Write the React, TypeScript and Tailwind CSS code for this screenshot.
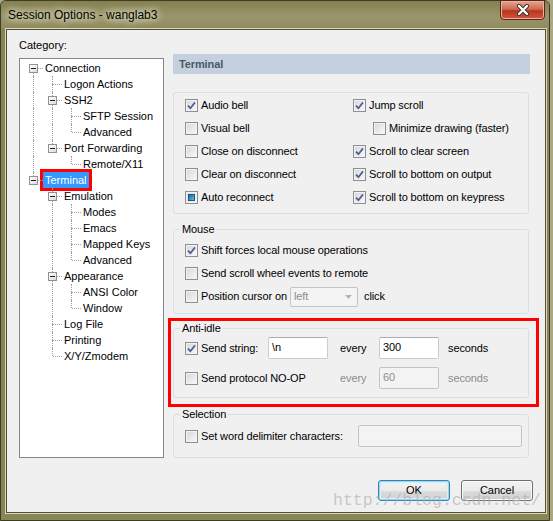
import type { ReactNode } from "react";

type TreeNode = { label: string; children?: TreeNode[]; selected?: boolean };

type Row = {
  label: string;
  depth: number;
  hasKids: boolean;
  first: boolean;
  last: boolean;
  guides: boolean[];
  selected?: boolean;
};

const categories: TreeNode[] = [
  {
    label: "Connection",
    children: [
      { label: "Logon Actions" },
      { label: "SSH2", children: [{ label: "SFTP Session" }, { label: "Advanced" }] },
      { label: "Port Forwarding", children: [{ label: "Remote/X11" }] },
    ],
  },
  {
    label: "Terminal",
    selected: true,
    children: [
      {
        label: "Emulation",
        children: [
          { label: "Modes" },
          { label: "Emacs" },
          { label: "Mapped Keys" },
          { label: "Advanced" },
        ],
      },
      { label: "Appearance", children: [{ label: "ANSI Color" }, { label: "Window" }] },
      { label: "Log File" },
      { label: "Printing" },
      { label: "X/Y/Zmodem" },
    ],
  },
];

function flatten(nodes: TreeNode[], depth: number, guides: boolean[], out: Row[]): Row[] {
  nodes.forEach((n, i) => {
    const last = i === nodes.length - 1;
    out.push({
      label: n.label,
      depth,
      hasKids: !!n.children,
      first: depth === 0 && i === 0,
      last,
      guides,
      selected: n.selected,
    });
    if (n.children) flatten(n.children, depth + 1, [...guides, !last], out);
  });
  return out;
}

const dots = "border-dotted border-[#a0a0a0]";

function TreeRow({ row }: { row: Row }) {
  return (
    <div className="flex h-4 items-center pl-[4px]">
      {row.guides.map((g, i) => (
        <span key={i} className="relative h-4 w-[19px] shrink-0">
          {g && <span className={`absolute left-[9px] top-0 h-4 border-l ${dots}`} />}
        </span>
      ))}
      <span className="relative h-4 w-[19px] shrink-0">
        {!row.first && <span className={`absolute left-[9px] top-0 h-2 border-l ${dots}`} />}
        {!row.last && <span className={`absolute left-[9px] top-2 h-2 border-l ${dots}`} />}
        <span className={`absolute left-[10px] top-2 w-[9px] border-t ${dots}`} />
        {row.hasKids && (
          <span className="absolute left-[5px] top-[4px] flex h-[9px] w-[9px] items-center justify-center border border-[#919191] bg-[linear-gradient(135deg,#ffffff,#dcdcdc)]">
            <span className="h-px w-[5px] bg-[#1e1e1e]" />
          </span>
        )}
      </span>
      <span
        className={
          row.selected
            ? "bg-[#3399ff] px-[2px] leading-4 text-white outline-[3px] outline-[#ff0000]"
            : "px-[2px] leading-4 text-black"
        }
      >
        {row.label}
      </span>
    </div>
  );
}

function Check({ state }: { state?: "on" | "mixed" }) {
  return (
    <span className="flex h-[13px] w-[13px] shrink-0 items-center justify-center border border-[#8e8f8f] bg-[linear-gradient(135deg,#d6d6d6,#fafafa)] shadow-[inset_0_0_0_1px_#f2f2f2]">
      {state === "on" && (
        <svg width="11" height="11" viewBox="0 0 11 11">
          <path d="M2 5.6 L4.4 8.2 L9 2.4" fill="none" stroke="#4a5f93" strokeWidth="1.7" />
        </svg>
      )}
      {state === "mixed" && (
        <span className="h-[7px] w-[7px] border border-[#1d5786] bg-[linear-gradient(135deg,#1b6aa5,#5cbbe6)]" />
      )}
    </span>
  );
}

function Option({ label, state, className = "" }: { label: string; state?: "on" | "mixed"; className?: string }) {
  return (
    <div className={`flex items-center gap-[3px] ${className}`}>
      <Check state={state} />
      <span className="whitespace-nowrap">{label}</span>
    </div>
  );
}

function Group({ title, children }: { title: string; children: ReactNode }) {
  return (
    <fieldset className="mr-[1px] rounded-[3px] border border-[#d5dfe5]">
      <legend className="ml-[6px] px-[2px] leading-[14px]">{title}</legend>
      {children}
    </fieldset>
  );
}

function Field({ value, disabled, className = "" }: { value?: string; disabled?: boolean; className?: string }) {
  return (
    <div
      className={`h-[22px] rounded-[2px] border pl-[3px] leading-[18px] ${
        disabled
          ? "border-[#c2c4c8] bg-[#f3f3f3] text-[#8d8d8d]"
          : "border-[#c9ccd2] border-t-[#abadb3] bg-white text-black"
      } ${className}`}
    >
      {value}
    </div>
  );
}

export default function App() {
  const rows = flatten(categories, 0, [], []);

  return (
    <div className="h-[521px] w-[553px] bg-[#a9a784] font-['Liberation_Sans',Arial,sans-serif] text-[11px] text-black">
      <div className="relative flex h-[521px] w-[550px] flex-col rounded-t-[6px] border border-[#3d3c26] bg-[#898555]">
        <div className="flex h-[28px] shrink-0 items-start justify-between rounded-t-[5px] bg-[linear-gradient(to_bottom,#85804f,#9a966c_55%,#8e8a5a)]">
          <span className="pl-[7px] pt-[6px] text-[12px] leading-4 [text-shadow:0_0_6px_#f4f2dc,0_0_10px_#f4f2dc]">
            Session Options - wanglab3
          </span>
          <span className="mr-[4px] -mt-px flex h-[20px] w-[45px] items-center justify-center rounded-b-[4px] border border-[#5b2418] bg-[linear-gradient(to_bottom,#e4a692,#cf6a52_45%,#b9351d_55%,#d0583b)] shadow-[inset_0_0_0_1px_#eab2a2]">
            <svg width="14" height="12" viewBox="0 0 14 12">
              <path d="M3 2 L11 10 M11 2 L3 10" stroke="#3b2a2a" strokeWidth="4" strokeLinecap="round" />
              <path d="M3 2 L11 10 M11 2 L3 10" stroke="#ffffff" strokeWidth="2.4" strokeLinecap="round" />
            </svg>
          </span>
        </div>

        <div className="ml-[5px] flex h-[484px] w-[540px] flex-col border border-[#4f4e37] bg-[#f0f0f0] shadow-[0_0_0_1px_#d9d7c0]">
          <div className="flex">
            <div className="ml-[12px] flex w-[145px] flex-col pt-[8px]">
              <div className="leading-[14px]">Category:</div>
              <div className="mt-[6px] h-[400px] border border-[#828790] bg-white pt-px">
                {rows.map((r, i) => (
                  <TreeRow key={i} row={r} />
                ))}
              </div>
            </div>

            <div className="ml-[9px] flex w-[357px] flex-col pt-[24px] tracking-[-0.12px]">
              <div className="flex h-[20px] items-center bg-[#c4d0dd] pl-[6px] font-bold text-[#4a5968]">
                Terminal
              </div>

              <div className="mr-[1px] mt-[18px] rounded-[3px] border border-[#d5dfe5] pb-[4px] pl-[11px] pt-[1px]">
                <div className="grid grid-cols-[168px_1fr]">
                  <Option className="h-[23px]" label="Audio bell" state="on" />
                  <Option className="h-[23px]" label="Jump scroll" state="on" />
                  <Option className="h-[23px]" label="Visual bell" />
                  <Option className="h-[23px] pl-[20px]" label="Minimize drawing (faster)" />
                  <Option className="h-[23px]" label="Close on disconnect" />
                  <Option className="h-[23px]" label="Scroll to clear screen" state="on" />
                  <Option className="h-[23px]" label="Clear on disconnect" />
                  <Option className="h-[23px]" label="Scroll to bottom on output" state="on" />
                  <Option className="h-[23px]" label="Auto reconnect" state="mixed" />
                  <Option className="h-[23px]" label="Scroll to bottom on keypress" state="on" />
                </div>
              </div>

              <div className="mt-[8px]">
                <Group title="Mouse">
                  <div className="pb-[5px] pl-[11px] pt-[3px]">
                    <Option className="h-[23px]" label="Shift forces local mouse operations" state="on" />
                    <Option className="h-[23px]" label="Send scroll wheel events to remote" />
                    <div className="grid h-[23px] grid-cols-[105px_68px_auto] items-center">
                      <Option label="Position cursor on" />
                      <div className="flex h-[20px] items-center justify-between rounded-[2px] border border-[#c5c5c5] bg-[#f4f4f4] pl-[3px] pr-[5px] text-[#8d8d8d]">
                        <span>left</span>
                        <svg width="7" height="4" viewBox="0 0 7 4">
                          <path d="M0 0 H7 L3.5 4 Z" fill="#b4b4b4" />
                        </svg>
                      </div>
                      <span className="pl-[6px]">click</span>
                    </div>
                  </div>
                </Group>
              </div>

              <div className="relative mt-[7px]">
                <Group title="Anti-idle">
                  <div className="pb-[8px] pl-[11px] pt-[2px]">
                    <div className="flex h-[22px] items-center">
                      <Option className="w-[83px]" label="Send string:" state="on" />
                      <Field className="w-[60px]" value={"\\n"} />
                      <span className="ml-[12px] w-[39px]">every</span>
                      <Field className="w-[60px]" value="300" />
                      <span className="ml-[9px]">seconds</span>
                    </div>
                    <div className="mt-[8px] flex h-[22px] items-center">
                      <Option className="w-[155px]" label="Send protocol NO-OP" />
                      <span className="w-[39px] text-[#8d8d8d]">every</span>
                      <Field className="w-[60px]" value="60" disabled />
                      <span className="ml-[9px] text-[#8d8d8d]">seconds</span>
                    </div>
                  </div>
                </Group>
                <span className="pointer-events-none absolute -bottom-[9px] -left-[5px] -right-[9px] -top-[3px] border-[3px] border-[#ff0000]" />
              </div>

              <div className="mt-[9px]">
                <Group title="Selection">
                  <div className="flex items-center pb-[10px] pl-[11px] pt-[4px]">
                    <Option className="w-[173px]" label="Set word delimiter characters:" />
                    <Field className="w-[164px]" disabled />
                  </div>
                </Group>
              </div>
            </div>
          </div>

          <div className="mt-[22px] flex justify-end gap-[11px] pr-[12px]">
            <button className="flex h-[21px] w-[72px] items-center justify-center rounded-[3px] border border-[#3c7fb1] bg-[linear-gradient(to_bottom,#f2f2f2,#ebebeb_50%,#dddddd_50%,#d1d1d1)] shadow-[inset_0_0_0_1px_#8fdcf8,inset_0_0_0_2px_#d6f1fb]">
              OK
            </button>
            <button className="flex h-[21px] w-[72px] items-center justify-center rounded-[3px] border border-[#707070] bg-[linear-gradient(to_bottom,#f2f2f2,#ebebeb_50%,#dddddd_50%,#cfcfcf)] shadow-[inset_0_0_0_1px_#fbfbfb]">
              Cancel
            </button>
          </div>
        </div>

        <span className="pointer-events-none absolute left-[332px] top-[490px] font-['Liberation_Mono',monospace] text-[16.5px] leading-[20px] text-[#b4b4b4]/70">
          http://blog.csdn.net/
        </span>
      </div>
    </div>
  );
}
